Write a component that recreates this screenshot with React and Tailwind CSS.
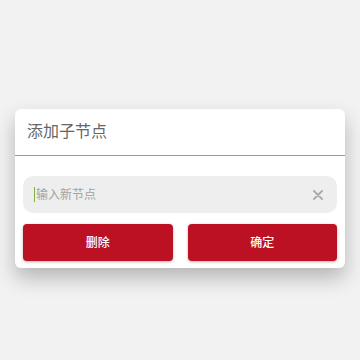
export default function App() {
  return (
    <div className="w-[360px] h-[360px] bg-[#f2f2f2] pt-[109px] px-[15px]" style={{ fontFamily: '"Roboto", "Noto Sans CJK SC", sans-serif' }}>
      <div className="w-[330px] bg-white rounded-[6px] shadow-[0_10px_20px_rgba(0,0,0,0.25)] overflow-hidden">
        <div className="h-[47px] flex items-center px-3 border-b border-[#999999]">
          <span className="text-[16px] text-[#666666]">添加子节点</span>
        </div>
        <div className="px-2 pt-5 pb-[7px]">
          <div className="h-[37px] rounded-[10px] bg-[#eeeeee] flex items-center pl-[11px] pr-[14px]">
            <span className="w-px h-[15px] bg-[#7cb342]" />
            <span className="flex-1 text-[12px] text-[#a3a3a3] ml-px">输入新节点</span>
            <svg width="10" height="10" viewBox="0 0 10 10" className="text-[#aaaaaa]">
              <path d="M1 1L9 9M9 1L1 9" stroke="currentColor" strokeWidth="1.8" strokeLinecap="round" />
            </svg>
          </div>
          <div className="flex gap-[15px] mt-[11px]">
            <button className="flex-1 h-[37px] rounded-[4px] bg-[#bb1122] text-white text-[12px] font-medium shadow-[0_1px_3px_rgba(0,0,0,0.3)]">删除</button>
            <button className="flex-1 h-[37px] rounded-[4px] bg-[#bb1122] text-white text-[12px] font-medium shadow-[0_1px_3px_rgba(0,0,0,0.3)]">确定</button>
          </div>
        </div>
      </div>
    </div>
  );
}
